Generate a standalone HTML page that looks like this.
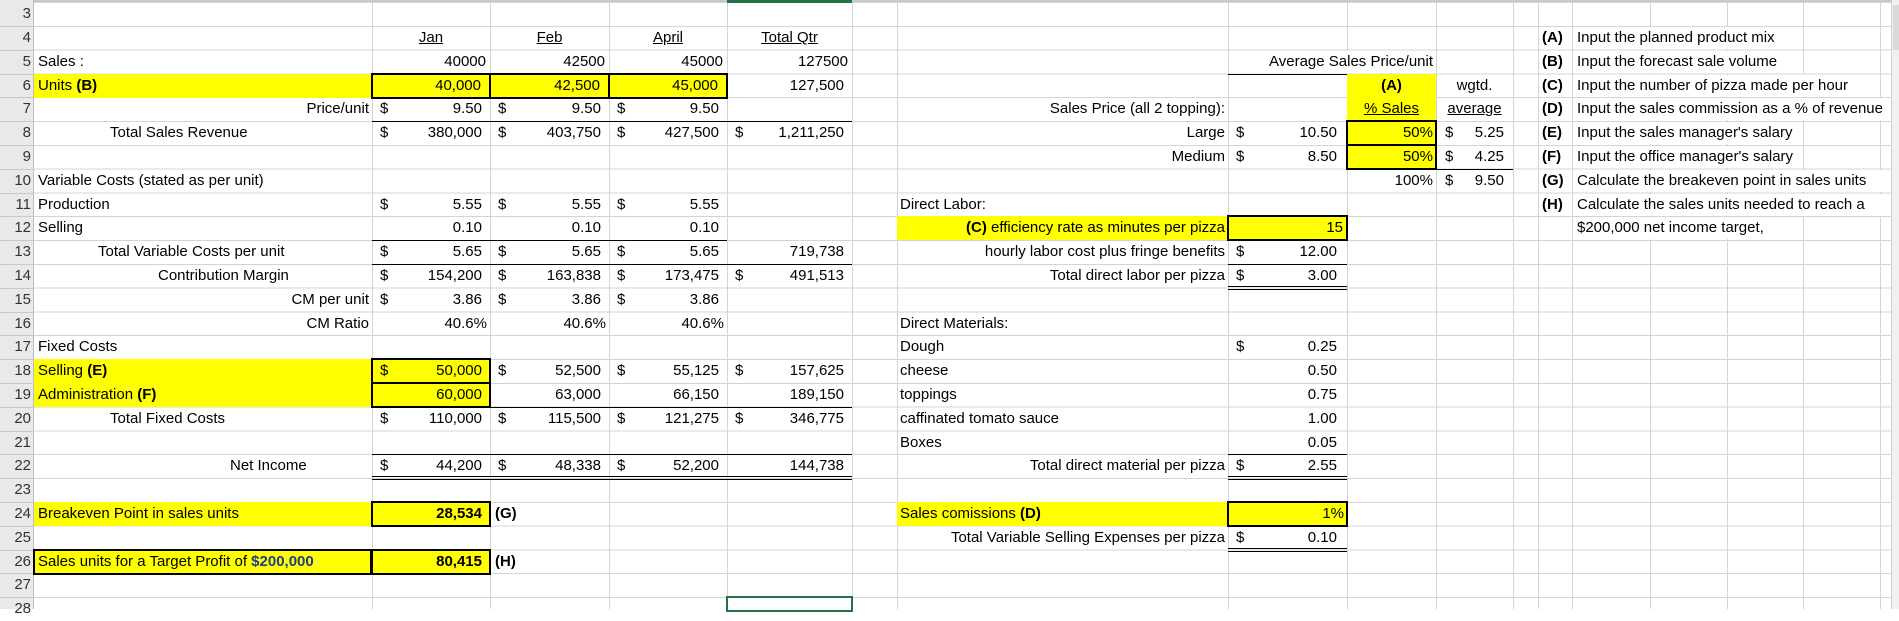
<!DOCTYPE html>
<html><head><meta charset="utf-8"><style>
*{margin:0;padding:0;box-sizing:border-box}
body{width:1899px;height:609px;overflow:hidden;background:#fff;font-family:"Liberation Sans",sans-serif;font-size:15px;color:#000;position:relative}
.g{position:absolute;left:0;top:2px;width:1891px;height:607px;background:repeating-linear-gradient(to bottom,#d4d4d4 0 1px,transparent 1px 23.8px)}
.v{position:absolute;top:0;width:1px;height:609px;background:#d4d4d4}
.rh{position:absolute;left:0;top:0;width:34px;height:609px;background:#e9e9e9;border-right:1px solid #bcbcbc}
.rn{position:absolute;left:0;width:31px;height:24px;line-height:24px;text-align:right;color:#333;font-size:15px}
.rl{position:absolute;left:0;width:34px;height:1px;background:#c8c8c8}
.c{position:absolute;height:24px;line-height:24px;white-space:nowrap}
.l{padding-left:4px}
.r{text-align:right;padding-right:4px}
.r8{text-align:right;padding-right:8px}
.r3{text-align:right;padding-right:3px}
.ce{text-align:center}
.a{display:flex;justify-content:space-between;padding:0 8px 0 8px}
.y{background:#ffff00}
.bx{border:2px solid #000}
.u{text-decoration:underline}
.w{background:#fff}
.hl{position:absolute;height:1px;background:#000}
</style></head><body>
<div class="g"></div>
<div class="v" style="left:372px"></div><div class="v" style="left:490px"></div><div class="v" style="left:609px"></div><div class="v" style="left:727px"></div><div class="v" style="left:852px"></div><div class="v" style="left:897px"></div><div class="v" style="left:1228px"></div><div class="v" style="left:1347px"></div><div class="v" style="left:1436px"></div><div class="v" style="left:1513px"></div><div class="v" style="left:1538px"></div><div class="v" style="left:1572px"></div><div class="v" style="left:1650px"></div><div class="v" style="left:1727px"></div><div class="v" style="left:1803px"></div><div class="v" style="left:1880px"></div>
<div style="position:absolute;left:0;top:0;width:1891px;height:2px;background:#c8c8c8"></div>
<div style="position:absolute;left:727px;top:0;width:125px;height:3px;background:#217346"></div>
<div style="position:absolute;left:1891px;top:0;width:8px;height:609px;background:#f0f0f0;border-left:1px solid #d0d0d0"></div>
<div style="position:absolute;left:1893px;top:5px;width:6px;height:45px;background:#dadada"></div>

<div class="rh"></div>
<div class="rl" style="top:26px"></div><div class="rl" style="top:50px"></div><div class="rl" style="top:74px"></div><div class="rl" style="top:97px"></div><div class="rl" style="top:121px"></div><div class="rl" style="top:145px"></div><div class="rl" style="top:169px"></div><div class="rl" style="top:193px"></div><div class="rl" style="top:216px"></div><div class="rl" style="top:240px"></div><div class="rl" style="top:264px"></div><div class="rl" style="top:288px"></div><div class="rl" style="top:312px"></div><div class="rl" style="top:335px"></div><div class="rl" style="top:359px"></div><div class="rl" style="top:383px"></div><div class="rl" style="top:407px"></div><div class="rl" style="top:431px"></div><div class="rl" style="top:454px"></div><div class="rl" style="top:478px"></div><div class="rl" style="top:502px"></div><div class="rl" style="top:526px"></div><div class="rl" style="top:550px"></div><div class="rl" style="top:573px"></div><div class="rl" style="top:597px"></div>
<div class="rn" style="top:2px">3</div><div class="rn" style="top:26px">4</div><div class="rn" style="top:50px">5</div><div class="rn" style="top:74px">6</div><div class="rn" style="top:97px">7</div><div class="rn" style="top:121px">8</div><div class="rn" style="top:145px">9</div><div class="rn" style="top:169px">10</div><div class="rn" style="top:193px">11</div><div class="rn" style="top:216px">12</div><div class="rn" style="top:240px">13</div><div class="rn" style="top:264px">14</div><div class="rn" style="top:288px">15</div><div class="rn" style="top:312px">16</div><div class="rn" style="top:335px">17</div><div class="rn" style="top:359px">18</div><div class="rn" style="top:383px">19</div><div class="rn" style="top:407px">20</div><div class="rn" style="top:431px">21</div><div class="rn" style="top:454px">22</div><div class="rn" style="top:478px">23</div><div class="rn" style="top:502px">24</div><div class="rn" style="top:526px">25</div><div class="rn" style="top:550px">26</div><div class="rn" style="top:573px">27</div><div class="rn" style="top:597px">28</div>

<!-- Row 4 -->
<div class="c ce" style="left:372px;top:26px;width:118px"><span class="u">Jan</span></div>
<div class="c ce" style="left:490px;top:26px;width:119px"><span class="u">Feb</span></div>
<div class="c ce" style="left:609px;top:26px;width:118px"><span class="u">April</span></div>
<div class="c ce" style="left:727px;top:26px;width:125px"><span class="u">Total Qtr</span></div>
<!-- Row 5 -->
<div class="c l" style="left:34px;top:50px;width:338px">Sales :</div>
<div class="c r" style="left:372px;top:50px;width:118px">40000</div>
<div class="c r" style="left:490px;top:50px;width:119px">42500</div>
<div class="c r" style="left:609px;top:50px;width:118px">45000</div>
<div class="c r" style="left:727px;top:50px;width:125px">127500</div>
<!-- Row 6 -->
<div class="c l y" style="left:34px;top:74px;width:338px">Units <b>(B)</b></div>
<div class="c r8 y bx" style="left:371px;top:73px;width:120px;height:26px;line-height:22px">40,000</div>
<div class="c r8 y bx" style="left:489px;top:73px;width:121px;height:26px;line-height:22px">42,500</div>
<div class="c r8 y bx" style="left:608px;top:73px;width:120px;height:26px;line-height:22px">45,000</div>
<div class="c r8" style="left:727px;top:74px;width:125px">127,500</div>
<!-- Row 7 -->
<div class="c r3" style="left:34px;top:97px;width:338px">Price/unit</div>
<div class="c a" style="left:372px;top:97px;width:118px"><span>$</span><span>9.50</span></div>
<div class="c a" style="left:490px;top:97px;width:119px"><span>$</span><span>9.50</span></div>
<div class="c a" style="left:609px;top:97px;width:118px"><span>$</span><span>9.50</span></div>
<div class="hl" style="left:372px;top:121px;width:480px"></div>
<!-- Row 8 -->
<div class="c" style="left:110px;top:121px">Total Sales Revenue</div>
<div class="c a" style="left:372px;top:121px;width:118px"><span>$</span><span>380,000</span></div>
<div class="c a" style="left:490px;top:121px;width:119px"><span>$</span><span>403,750</span></div>
<div class="c a" style="left:609px;top:121px;width:118px"><span>$</span><span>427,500</span></div>
<div class="c a" style="left:727px;top:121px;width:125px"><span>$</span><span>1,211,250</span></div>
<!-- Row 10 -->
<div class="c l" style="left:34px;top:169px">Variable Costs (stated as per unit)</div>
<!-- Row 11 -->
<div class="c l" style="left:34px;top:193px">Production</div>
<div class="c a" style="left:372px;top:193px;width:118px"><span>$</span><span>5.55</span></div>
<div class="c a" style="left:490px;top:193px;width:119px"><span>$</span><span>5.55</span></div>
<div class="c a" style="left:609px;top:193px;width:118px"><span>$</span><span>5.55</span></div>
<!-- Row 12 -->
<div class="c l" style="left:34px;top:216px">Selling</div>
<div class="c r8" style="left:372px;top:216px;width:118px">0.10</div>
<div class="c r8" style="left:490px;top:216px;width:119px">0.10</div>
<div class="c r8" style="left:609px;top:216px;width:118px">0.10</div>
<div class="hl" style="left:372px;top:240px;width:355px"></div>
<!-- Row 13 -->
<div class="c" style="left:98px;top:240px">Total Variable Costs per unit</div>
<div class="c a" style="left:372px;top:240px;width:118px"><span>$</span><span>5.65</span></div>
<div class="c a" style="left:490px;top:240px;width:119px"><span>$</span><span>5.65</span></div>
<div class="c a" style="left:609px;top:240px;width:118px"><span>$</span><span>5.65</span></div>
<div class="c r8" style="left:727px;top:240px;width:125px">719,738</div>
<div class="hl" style="left:372px;top:264px;width:480px"></div>
<!-- Row 14 -->
<div class="c" style="left:158px;top:264px">Contribution Margin</div>
<div class="c a" style="left:372px;top:264px;width:118px"><span>$</span><span>154,200</span></div>
<div class="c a" style="left:490px;top:264px;width:119px"><span>$</span><span>163,838</span></div>
<div class="c a" style="left:609px;top:264px;width:118px"><span>$</span><span>173,475</span></div>
<div class="c a" style="left:727px;top:264px;width:125px"><span>$</span><span>491,513</span></div>
<!-- Row 15 -->
<div class="c r3" style="left:34px;top:288px;width:338px">CM per unit</div>
<div class="c a" style="left:372px;top:288px;width:118px"><span>$</span><span>3.86</span></div>
<div class="c a" style="left:490px;top:288px;width:119px"><span>$</span><span>3.86</span></div>
<div class="c a" style="left:609px;top:288px;width:118px"><span>$</span><span>3.86</span></div>
<!-- Row 16 -->
<div class="c r3" style="left:34px;top:312px;width:338px">CM Ratio</div>
<div class="c r3" style="left:372px;top:312px;width:118px">40.6%</div>
<div class="c r3" style="left:490px;top:312px;width:119px">40.6%</div>
<div class="c r3" style="left:609px;top:312px;width:118px">40.6%</div>
<!-- Row 17 -->
<div class="c l" style="left:34px;top:335px">Fixed Costs</div>
<!-- Row 18 -->
<div class="c l y" style="left:34px;top:359px;width:338px">Selling <b>(E)</b></div>
<div class="c a y bx" style="left:371px;top:358px;width:120px;height:26px;line-height:22px;padding:0 7px"><span>$</span><span>50,000</span></div>
<div class="c a" style="left:490px;top:359px;width:119px"><span>$</span><span>52,500</span></div>
<div class="c a" style="left:609px;top:359px;width:118px"><span>$</span><span>55,125</span></div>
<div class="c a" style="left:727px;top:359px;width:125px"><span>$</span><span>157,625</span></div>
<!-- Row 19 -->
<div class="c l y" style="left:34px;top:383px;width:338px">Administration <b>(F)</b></div>
<div class="hl" style="left:372px;top:407px;width:480px"></div>
<div class="c r8 y bx" style="left:371px;top:382px;width:120px;height:26px;line-height:22px;padding-right:7px">60,000</div>
<div class="c r8" style="left:490px;top:383px;width:119px">63,000</div>
<div class="c r8" style="left:609px;top:383px;width:118px">66,150</div>
<div class="c r8" style="left:727px;top:383px;width:125px">189,150</div>
<!-- Row 20 -->
<div class="c" style="left:110px;top:407px">Total Fixed Costs</div>
<div class="c a" style="left:372px;top:407px;width:118px"><span>$</span><span>110,000</span></div>
<div class="c a" style="left:490px;top:407px;width:119px"><span>$</span><span>115,500</span></div>
<div class="c a" style="left:609px;top:407px;width:118px"><span>$</span><span>121,275</span></div>
<div class="c a" style="left:727px;top:407px;width:125px"><span>$</span><span>346,775</span></div>
<!-- Row 22 -->
<div class="hl" style="left:372px;top:454px;width:480px"></div>
<div class="c" style="left:230px;top:454px">Net Income</div>
<div class="c a" style="left:372px;top:454px;width:118px"><span>$</span><span>44,200</span></div>
<div class="c a" style="left:490px;top:454px;width:119px"><span>$</span><span>48,338</span></div>
<div class="c a" style="left:609px;top:454px;width:118px"><span>$</span><span>52,200</span></div>
<div class="c r8" style="left:727px;top:454px;width:125px">144,738</div>
<div class="hl" style="left:372px;top:476px;width:480px"></div>
<div class="hl" style="left:372px;top:479px;width:480px"></div>
<!-- Row 24 -->
<div class="c l y" style="left:34px;top:502px;width:338px">Breakeven Point in sales units</div>
<div class="c r8 y bx" style="left:371px;top:501px;width:120px;height:26px;line-height:22px;padding-right:7px"><b>28,534</b></div>
<div class="c l" style="left:490px;top:502px;padding-left:5px"><b>(G)</b></div>
<!-- Row 26 -->
<div class="c y bx" style="left:33px;top:549px;width:339px;height:26px;line-height:22px;padding-left:3px">Sales units for a Target Profit of <b style="color:#1f3b8f">$200,000</b></div>
<div class="c r8 y bx" style="left:371px;top:549px;width:120px;height:26px;line-height:22px;padding-right:7px"><b>80,415</b></div>
<div class="c l" style="left:490px;top:550px;padding-left:5px"><b>(H)</b></div>
<!-- Selected cell -->
<div style="position:absolute;left:726px;top:596px;width:127px;height:16px;border:2px solid #217346"></div>

<!-- Middle right -->
<div class="c r w" style="left:1229px;top:51px;width:206px;height:22px;line-height:22px;padding-right:2px">Average Sales Price/unit</div>
<div class="hl" style="left:1228px;top:74px;width:208px"></div>
<div class="c ce y" style="left:1347px;top:74px;width:89px"><b>(A)</b></div>
<div class="c ce" style="left:1436px;top:74px;width:77px">wgtd.</div>
<div class="c r3" style="left:897px;top:97px;width:331px">Sales Price (all 2 topping):</div>
<div class="c ce y" style="left:1347px;top:97px;width:89px"><span class="u">% Sales</span></div>
<div class="c ce" style="left:1436px;top:97px;width:77px"><span class="u">average</span></div>
<div class="c r3" style="left:897px;top:121px;width:331px">Large</div>
<div class="c a" style="left:1228px;top:121px;width:119px;padding-right:10px"><span>$</span><span>10.50</span></div>
<div class="c r3 y bx" style="left:1346px;top:120px;width:91px;height:26px;line-height:22px;padding-right:2px">50%</div>
<div class="c a" style="left:1436px;top:121px;width:77px;padding:0 9px 0 9px"><span>$</span><span>5.25</span></div>
<div class="c r3" style="left:897px;top:145px;width:331px">Medium</div>
<div class="c a" style="left:1228px;top:145px;width:119px;padding-right:10px"><span>$</span><span>8.50</span></div>
<div class="c r3 y bx" style="left:1346px;top:144px;width:91px;height:26px;line-height:22px;padding-right:2px">50%</div>
<div class="c a" style="left:1436px;top:145px;width:77px;padding:0 9px 0 9px"><span>$</span><span>4.25</span></div>
<div class="hl" style="left:1436px;top:169px;width:77px"></div>
<div class="c r3" style="left:1347px;top:169px;width:89px">100%</div>
<div class="c a" style="left:1436px;top:169px;width:77px;padding:0 9px 0 9px"><span>$</span><span>9.50</span></div>

<div class="c" style="left:897px;top:193px;padding-left:3px">Direct Labor:</div>
<div class="c r3 y" style="left:897px;top:216px;width:331px"><b>(C)</b> efficiency rate as minutes per pizza</div>
<div class="c r y bx" style="left:1227px;top:215px;width:121px;height:26px;line-height:22px;padding-right:3px">15</div>
<div class="c r3" style="left:897px;top:240px;width:331px">hourly labor cost plus fringe benefits</div>
<div class="c a" style="left:1228px;top:240px;width:119px;padding-right:10px"><span>$</span><span>12.00</span></div>
<div class="hl" style="left:1228px;top:264px;width:119px"></div>
<div class="c r3" style="left:897px;top:264px;width:331px">Total direct labor per pizza</div>
<div class="c a" style="left:1228px;top:264px;width:119px;padding-right:10px"><span>$</span><span>3.00</span></div>
<div class="hl" style="left:1228px;top:286px;width:119px"></div><div class="hl" style="left:1228px;top:289px;width:119px"></div>

<div class="c" style="left:897px;top:312px;padding-left:3px">Direct Materials:</div>
<div class="c" style="left:897px;top:335px;padding-left:3px">Dough</div>
<div class="c a" style="left:1228px;top:335px;width:119px;padding-right:10px"><span>$</span><span>0.25</span></div>
<div class="c" style="left:897px;top:359px;padding-left:3px">cheese</div>
<div class="c r" style="left:1228px;top:359px;width:119px;padding-right:10px">0.50</div>
<div class="c" style="left:897px;top:383px;padding-left:3px">toppings</div>
<div class="c r" style="left:1228px;top:383px;width:119px;padding-right:10px">0.75</div>
<div class="c" style="left:897px;top:407px;padding-left:3px">caffinated tomato sauce</div>
<div class="c r" style="left:1228px;top:407px;width:119px;padding-right:10px">1.00</div>
<div class="c" style="left:897px;top:431px;padding-left:3px">Boxes</div>
<div class="c r" style="left:1228px;top:431px;width:119px;padding-right:10px">0.05</div>
<div class="hl" style="left:1228px;top:454px;width:119px"></div>
<div class="c r3" style="left:897px;top:454px;width:331px">Total direct material per pizza</div>
<div class="c a" style="left:1228px;top:454px;width:119px;padding-right:10px"><span>$</span><span>2.55</span></div>
<div class="hl" style="left:1228px;top:476px;width:119px"></div><div class="hl" style="left:1228px;top:479px;width:119px"></div>

<div class="c y" style="left:897px;top:502px;width:331px;padding-left:3px">Sales comissions <b>(D)</b></div>
<div class="c r3 y bx" style="left:1227px;top:501px;width:121px;height:26px;line-height:22px;padding-right:2px">1%</div>
<div class="c r3" style="left:897px;top:526px;width:331px">Total Variable Selling Expenses per pizza</div>
<div class="c a" style="left:1228px;top:526px;width:119px;padding-right:10px"><span>$</span><span>0.10</span></div>
<div class="hl" style="left:1228px;top:548px;width:119px"></div><div class="hl" style="left:1228px;top:551px;width:119px"></div>

<!-- Far right -->
<div class="c l" style="left:1538px;top:26px"><b>(A)</b></div>
<div class="c l" style="left:1538px;top:50px"><b>(B)</b></div>
<div class="c l" style="left:1538px;top:74px"><b>(C)</b></div>
<div class="c l" style="left:1538px;top:97px"><b>(D)</b></div>
<div class="c l" style="left:1538px;top:121px"><b>(E)</b></div>
<div class="c l" style="left:1538px;top:145px"><b>(F)</b></div>
<div class="c l" style="left:1538px;top:169px"><b>(G)</b></div>
<div class="c l" style="left:1538px;top:193px"><b>(H)</b></div>
<div class="c w" style="left:1573px;top:27px;height:22px;line-height:22px;padding-left:4px;padding-right:3px">Input the planned product mix</div>
<div class="c w" style="left:1573px;top:51px;height:22px;line-height:22px;padding-left:4px;padding-right:3px">Input the forecast sale volume</div>
<div class="c w" style="left:1573px;top:75px;width:307px;height:22px;line-height:22px;padding-left:4px">Input the number of pizza made per hour</div>
<div class="c w" style="left:1573px;top:98px;width:318px;height:22px;line-height:22px;padding-left:4px;overflow:hidden">Input the sales commission as a % of revenue</div>
<div class="c w" style="left:1573px;top:122px;width:230px;height:22px;line-height:22px;padding-left:4px">Input the sales manager's salary</div>
<div class="c w" style="left:1573px;top:146px;width:230px;height:22px;line-height:22px;padding-left:4px">Input the office manager's salary</div>
<div class="c w" style="left:1573px;top:170px;width:318px;height:22px;line-height:22px;padding-left:4px;overflow:hidden">Calculate the breakeven point in sales units</div>
<div class="c w" style="left:1573px;top:194px;width:318px;height:22px;line-height:22px;padding-left:4px;overflow:hidden">Calculate the sales units needed to reach a</div>
<div class="c w" style="left:1573px;top:217px;width:230px;height:22px;line-height:22px;padding-left:4px">$200,000 net income target,</div>
</body></html>
